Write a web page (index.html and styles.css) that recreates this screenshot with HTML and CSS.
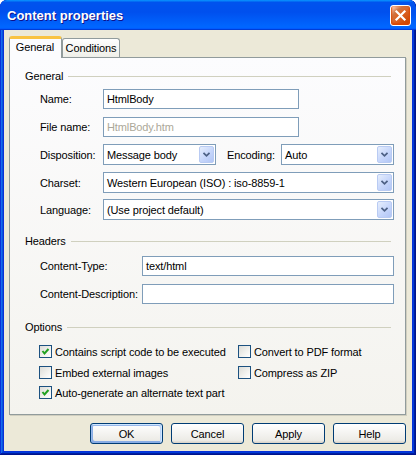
FILE: index.html
```html
<!DOCTYPE html>
<html>
<head>
<meta charset="utf-8">
<link rel="stylesheet" href="styles.css">
</head>
<body>
<div class="window">
  <div class="titlebar">
    <span class="title">Content properties</span>
    <span class="close"><svg width="19" height="19" viewBox="0 0 19 19"><path d="M5.5 5.5 L13.5 13.5 M13.5 5.5 L5.5 13.5" stroke="#fff" stroke-width="2.2" stroke-linecap="square"/></svg></span>
  </div>
  <div class="client">
    <div class="tabs">
      <div class="tab active">General</div>
      <div class="tab">Conditions</div>
    </div>
    <div class="panel">
      <div class="legend m11"><span>General</span><i></i></div>
      <div class="row m6"><span class="lbl">Name:</span><div class="edit w196">HtmlBody</div></div>
      <div class="row m8"><span class="lbl">File name:</span><div class="edit w196 dis">HtmlBody.htm</div></div>
      <div class="row m7 tall"><span class="lbl">Disposition:</span>
        <div class="combo w113"><span class="val">Message body</span><span class="drop"><svg width="15" height="17" viewBox="0 0 15 17"><path d="M4 6.5 L7.5 10 L11 6.5" fill="none" stroke="#4D6185" stroke-width="2"/></svg></span></div>
        <span class="lbl enc">Encoding:</span>
        <div class="combo grow"><span class="val">Auto</span><span class="drop"><svg width="15" height="17" viewBox="0 0 15 17"><path d="M4 6.5 L7.5 10 L11 6.5" fill="none" stroke="#4D6185" stroke-width="2"/></svg></span></div>
      </div>
      <div class="row m7 tall"><span class="lbl">Charset:</span>
        <div class="combo grow"><span class="val">Western European (ISO) : iso-8859-1</span><span class="drop"><svg width="15" height="17" viewBox="0 0 15 17"><path d="M4 6.5 L7.5 10 L11 6.5" fill="none" stroke="#4D6185" stroke-width="2"/></svg></span></div>
      </div>
      <div class="row m6 tall"><span class="lbl">Language:</span>
        <div class="combo grow"><span class="val">(Use project default)</span><span class="drop"><svg width="15" height="17" viewBox="0 0 15 17"><path d="M4 6.5 L7.5 10 L11 6.5" fill="none" stroke="#4D6185" stroke-width="2"/></svg></span></div>
      </div>
      <div class="legend m14"><span>Headers</span><i></i></div>
      <div class="row m8"><span class="lbl wide">Content-Type:</span><div class="edit grow">text/html</div></div>
      <div class="row m8"><span class="lbl wide">Content-Description:</span><div class="edit grow"></div></div>
      <div class="legend m16"><span>Options</span><i></i></div>
      <div class="checks m11">
        <div class="chk"><span class="box on"><svg width="11" height="11" viewBox="0 0 11 11"><path d="M2.5 5 L4.5 7.5 L8.5 3" fill="none" stroke="#21A121" stroke-width="2"/></svg></span>Contains script code to be executed</div>
        <div class="chk"><span class="box"></span>Convert to PDF format</div>
      </div>
      <div class="checks m8">
        <div class="chk"><span class="box"></span>Embed external images</div>
        <div class="chk"><span class="box"></span>Compress as ZIP</div>
      </div>
      <div class="checks m7">
        <div class="chk"><span class="box on"><svg width="11" height="11" viewBox="0 0 11 11"><path d="M2.5 5 L4.5 7.5 L8.5 3" fill="none" stroke="#21A121" stroke-width="2"/></svg></span>Auto-generate an alternate text part</div>
      </div>
    </div>
    <div class="buttons">
      <div class="btn default">OK</div>
      <div class="btn">Cancel</div>
      <div class="btn">Apply</div>
      <div class="btn">Help</div>
    </div>
  </div>
</div>
</body>
</html>
```

FILE: styles.css
```css
html, body {
  margin: 0;
  padding: 0;
  background: #ffffff;
}
.window {
  width: 416px;
  height: 455px;
  box-sizing: border-box;
  display: flex;
  flex-direction: column;
  background: #0831d9;
  box-shadow: inset -1px -1px #00138c, inset 1px 1px #0831d9, inset -2px -2px #001ea0, inset 2px 2px #166aee, inset -3px -3px #003bda, inset 3px 3px #0855dd;
  border-radius: 7px 7px 0 0;
  font-family: "Liberation Sans", Arial, sans-serif;
  font-size: 11px;
  letter-spacing: -0.12px;
  color: #000;
  overflow: hidden;
}
.titlebar {
  height: 30px;
  flex: none;
  display: flex;
  align-items: center;
  justify-content: space-between;
  padding: 0 5px 0 7px;
  background: linear-gradient(180deg, #0997ff 0%, #0053ee 8%, #0050ee 40%, #06f 88%, #06f 93%, #005bff 95%, #003dd7 96%, #003dd7 100%);
  border-radius: 7px 7px 0 0;
}
.title {
  color: #fff;
  font-family: "Liberation Sans", Arial, sans-serif;
  font-weight: bold;
  font-size: 13px;
  letter-spacing: 0;
  text-shadow: 1px 1px #0f1089;
  margin-top: 1px;
}
.close {
  width: 21px;
  height: 21px;
  box-sizing: border-box;
  border: 1px solid #fff;
  border-radius: 3px;
  background: radial-gradient(circle at 90% 90%, #cc4600 0, #dc6527 55%, #cd7546 70%, #ffccb2 90%, #fff 100%);
  box-shadow: inset 0 -1px 2px 1px #da4600;
  display: flex;
  align-items: center;
  justify-content: center;
}
.client {
  flex: 1;
  margin: 0 4px 4px 4px;
  background: #ece9d8;
  padding: 6px 6px 7px 5px;
  display: flex;
  flex-direction: column;
}
.tabs {
  height: 21px;
  display: flex;
  align-items: flex-end;
}
.tab {
  height: 19px;
  box-sizing: border-box;
  width: 58px;
  border: 1px solid #919b9c;
  border-bottom: none;
  border-radius: 3px 3px 0 0;
  background: linear-gradient(180deg, #fff, #fafaf9 26%, #f0f0ea 95%, #ecebe6);
  text-align: center;
  line-height: 19px;
  margin-left: -1px;
}
.tab.active {
  position: relative;
  z-index: 1;
  width: 53px;
  height: 22px;
  margin-left: 0;
  margin-bottom: -1px;
  background: #fcfcfe;
  border-top: 3px solid #f9c341;
  line-height: 17px;
  padding-right: 1px;
}
.tab.active + .tab {
  margin-left: 0;
}
.panel {
  height: 358px;
  box-sizing: border-box;
  border: 1px solid #919b9c;
  background: linear-gradient(180deg, #fcfcfe, #f4f3ee);
  box-shadow: 1px 1px 0 #d0cebf;
  display: flex;
  flex-direction: column;
}
.legend {
  height: 14px;
  display: flex;
  align-items: center;
  padding: 0 14px 0 15px;
  line-height: 14px;
}
.legend i {
  flex: 1;
  height: 1px;
  background: #d0d0bf;
  margin-left: 5px;
}
.row {
  height: 20px;
  display: flex;
  align-items: center;
  padding: 0 11px 0 30px;
}
.row.tall {
  height: 21px;
}
.lbl {
  width: 63px;
  flex: none;
}
.lbl.wide {
  width: 102px;
}
.lbl.enc {
  width: 54px;
  margin-left: 11px;
}
.edit, .combo {
  height: 100%;
  box-sizing: border-box;
  border: 1px solid #7f9db9;
  background: #fff;
  display: flex;
  align-items: center;
  padding-left: 3px;
  white-space: nowrap;
}
.edit.dis {
  color: #aca899;
}
.w196 { width: 196px; }
.w113 { width: 113px; flex: none; }
.grow { flex: 1; }
.combo .val {
  flex: 1;
  padding-top: 1px;
}
.drop {
  width: 15px;
  height: 17px;
  margin: 1px;
  box-sizing: border-box;
  border: 1px solid #b9cbf3;
  border-radius: 2px;
  background: linear-gradient(135deg, #e6eefc 0%, #c6d6fb 55%, #b2c6f5 100%);
  display: flex;
  align-items: center;
  justify-content: center;
}
.drop svg {
  display: block;
}
.checks {
  height: 13px;
  display: flex;
  align-items: center;
  padding-left: 29px;
}
.chk {
  display: flex;
  align-items: center;
  white-space: nowrap;
}
.chk:first-child {
  width: 199px;
}
.box {
  width: 13px;
  height: 13px;
  box-sizing: border-box;
  border: 1px solid #1c5180;
  background: linear-gradient(135deg, #dcdcd7 0%, #f2f2ef 60%, #fff 100%);
  margin-right: 3px;
  display: flex;
  align-items: center;
  justify-content: center;
  flex: none;
}
.box svg { display: block; }
.m6 { margin-top: 6px; }
.m7 { margin-top: 7px; }
.m8 { margin-top: 8px; }
.m11 { margin-top: 11px; }
.m14 { margin-top: 14px; }
.m16 { margin-top: 16px; }
.buttons {
  margin-top: 8px;
  display: flex;
  justify-content: flex-end;
  gap: 8px;
}
.btn {
  width: 73px;
  height: 21px;
  box-sizing: border-box;
  border: 1px solid #003c74;
  border-radius: 3px;
  background: linear-gradient(180deg, #fff, #ecebe6 86%, #d6d0c5);
  display: flex;
  align-items: center;
  justify-content: center;
}
.btn.default {
  box-shadow: inset -1px 1px #cee7ff, inset 1px 2px #98b8ea, inset -2px 2px #bcd4f6, inset 1px -1px #89ade4, inset 2px -2px #89ade4;
}
```
